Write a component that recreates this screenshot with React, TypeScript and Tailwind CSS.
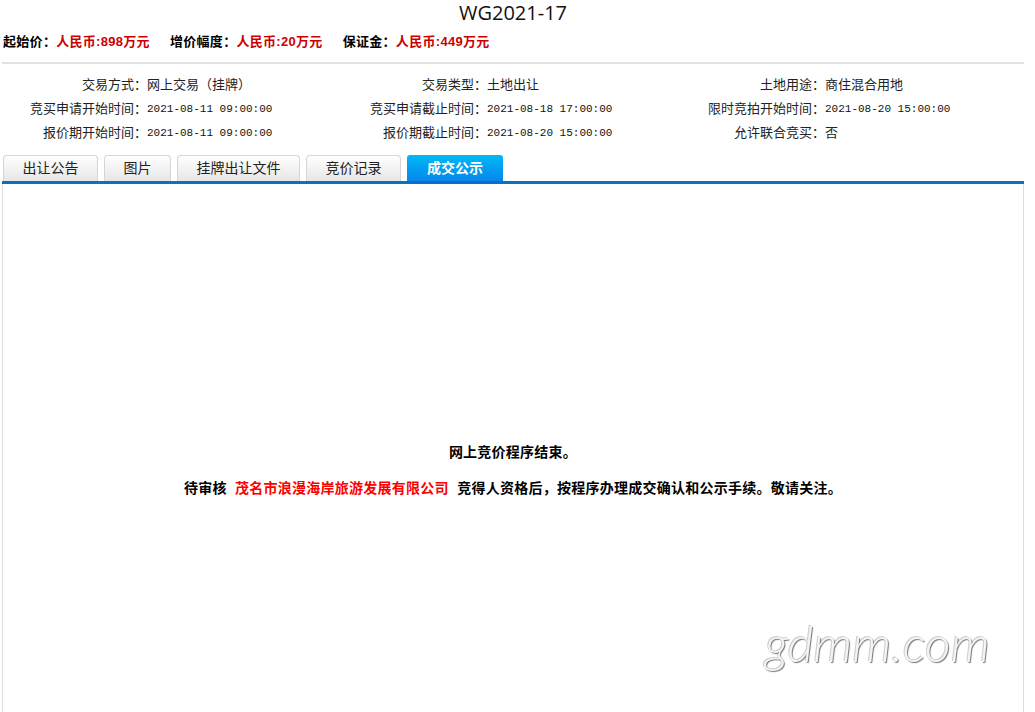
import React from "react";

const cjk = "font-['Liberation_Sans','Noto_Sans_CJK_SC',sans-serif]";

const rows: [string, string, boolean][][] = [
  [
    ["交易方式：", "网上交易（挂牌）", false],
    ["交易类型：", "土地出让", false],
    ["土地用途：", "商住混合用地", false],
  ],
  [
    ["竞买申请开始时间：", "2021-08-11 09:00:00", true],
    ["竞买申请截止时间：", "2021-08-18 17:00:00", true],
    ["限时竞拍开始时间：", "2021-08-20 15:00:00", true],
  ],
  [
    ["报价期开始时间：", "2021-08-11 09:00:00", true],
    ["报价期截止时间：", "2021-08-20 15:00:00", true],
    ["允许联合竞买：", "否", false],
  ],
];

const tabs = [
  { label: "出让公告", w: "w-[95px]" },
  { label: "图片", w: "w-[67px]" },
  { label: "挂牌出让文件", w: "w-[123px]" },
  { label: "竞价记录", w: "w-[95px]" },
  { label: "成交公示", w: "w-[96px]", active: true },
];

export default function App() {
  return (
    <div className={`w-[1035px] h-[712px] overflow-hidden bg-white text-black ${cjk}`}>
      <div className="w-[1022px] ml-[2px]">
        {/* Title */}
        <div className="h-[26px] flex items-center justify-center font-['Open_Sans','Noto_Sans_CJK_SC',sans-serif] text-[20px] leading-none text-[#111]">
          WG2021-17
        </div>

        {/* Price line */}
        <div className="mt-[7px] h-[18px] flex items-center gap-[20px] text-[13px] font-bold pl-[1px] tracking-[0.3px]">
          <span>
            起始价：<span className="text-[#cc0000]">人民币:898万元</span>
          </span>
          <span>
            增价幅度：<span className="text-[#cc0000]">人民币:20万元</span>
          </span>
          <span>
            保证金：<span className="text-[#cc0000]">人民币:449万元</span>
          </span>
        </div>

        <div className="mt-[11px] border-t-[2px] border-[#e2e2e2]" />

        {/* Info grid */}
        <div className="pt-[12px] flex flex-col gap-[6px] text-[13px]">
          {rows.map((row, i) => (
            <div key={i} className="h-[18px] flex items-center">
              {row.map(([label, value, mono], j) => (
                <div
                  key={j}
                  className={`flex items-center ${j === 0 ? "w-[340px]" : j === 1 ? "w-[338px]" : "w-[320px]"}`}
                >
                  <span className="w-[145px] text-right text-[#222] whitespace-nowrap">{label}</span>
                  <span
                    className={
                      mono
                        ? "font-['Liberation_Mono',monospace] text-[11px] text-[#111]"
                        : "text-[#222]"
                    }
                  >
                    {value}
                  </span>
                </div>
              ))}
            </div>
          ))}
        </div>

        {/* Tabs */}
        <div className="mt-[13px] flex items-end gap-[6px] pl-[1px] h-[26px]">
          {tabs.map((t) =>
            t.active ? (
              <div
                key={t.label}
                className={`${t.w} h-[26px] rounded-t-[3px] bg-gradient-to-b from-[#05b9f5] to-[#0a86ea] text-white font-bold text-[14px] flex items-center justify-center`}
              >
                {t.label}
              </div>
            ) : (
              <div
                key={t.label}
                className={`${t.w} h-[26px] rounded-t-[4px] border border-b-0 border-[#d6d6d6] bg-gradient-to-b from-[#ffffff] to-[#e6e6e6] text-[14px] text-[#222] flex items-center justify-center`}
              >
                {t.label}
              </div>
            )
          )}
        </div>
        <div className="h-[3px] bg-[#0b6fc6]" />

        {/* Content box */}
        <div className="relative h-[600px] border-x border-[#dddddd]">
          <div className="pt-[258px] flex flex-col items-center text-[14px] font-bold tracking-[0.25px]">
            <div className="h-[20px] leading-[20px]">网上竞价程序结束。</div>
            <div className="mt-[16px] h-[20px] leading-[20px] whitespace-pre">
              待审核 <span className="text-[#ff0000]"> 茂名市浪漫海岸旅游发展有限公司 </span> 竞得人资格后，按程序办理成交确认和公示手续。敬请关注。
            </div>
          </div>
          {/* watermark */}
          <div className="absolute left-[762px] top-[434px] font-['Lato','DejaVu_Sans',sans-serif] font-light italic text-[50px] leading-none text-[#f4f4f4] [text-shadow:1px_1px_1px_#777,-1px_-1px_0_#cfcfcf]">
            gdmm.com
          </div>
        </div>
      </div>
    </div>
  );
}
